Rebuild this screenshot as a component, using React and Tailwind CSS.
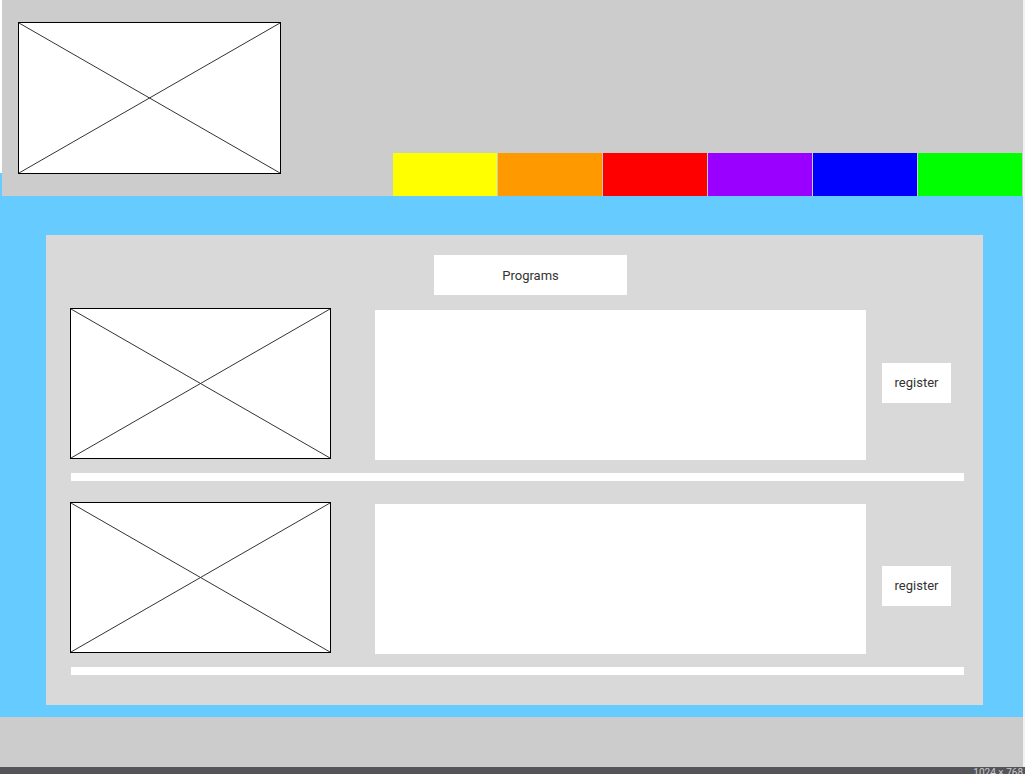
import React from "react";

// wireframe placeholder: box with an X across it
function Placeholder({ className }) {
  return (
    <div className={`relative border border-black bg-white shrink-0 ${className}`}>
      <svg className="absolute inset-0 w-full h-full" viewBox="0 0 100 100" preserveAspectRatio="none">
        <line x1="0" y1="0" x2="100" y2="100" stroke="#333" strokeWidth="1" vectorEffect="non-scaling-stroke" />
        <line x1="100" y1="0" x2="0" y2="100" stroke="#333" strokeWidth="1" vectorEffect="non-scaling-stroke" />
      </svg>
    </div>
  );
}

const navColors = ["bg-[#ffff00]", "bg-[#ff9900]", "bg-[#ff0000]", "bg-[#9900ff]", "bg-[#0000ff]", "bg-[#00ff00]"];

function ProgramRow({ regTop }) {
  return (
    <div className="flex flex-col">
      <div className="flex items-start">
        <Placeholder className="w-[261px] h-[151px]" />
        <div className="ml-[44px] mt-[2px] w-[491px] h-[150px] bg-white" />
        <button
          className={`ml-[16px] w-[69px] h-[40px] bg-white text-[13px] text-[#333] ${regTop}`}
          style={{ fontFamily: "Roboto, sans-serif" }}
        >
          register
        </button>
      </div>
      <div className="ml-px mt-[13px] w-[893px] h-[8px] bg-white" />
    </div>
  );
}

export default function App() {
  return (
    <div className="w-[1025px] h-[774px] flex flex-col bg-[#f2f2f2] overflow-hidden" style={{ fontFamily: "Roboto, sans-serif" }}>
      {/* header */}
      <div className="h-[173px] w-[1023px] flex bg-[#cccccc] border-l-2 border-white">
        <Placeholder className="ml-[16px] mt-[22px] w-[263px] h-[152px]" />
      </div>
      <div className="relative w-[1023px]">
        <div className="absolute left-[393px] -top-[20px] flex gap-px">
          {navColors.map((c) => (
            <div key={c} className={`w-[104px] h-[43px] ${c}`} />
          ))}
        </div>
      </div>
      <div className="h-[23px] w-[1023px] flex bg-[#66ccff]">
        <div className="ml-[2px] flex-1 bg-[#cccccc]" />
      </div>

      {/* main */}
      <div className="w-[1023px] h-[521px] bg-[#66ccff] pt-[39px] pl-[46px]">
        <div className="w-[937px] h-[470px] bg-[#d9d9d9] pt-[20px] pl-[24px]">
          <div className="ml-[364px] w-[193px] h-[40px] bg-white flex items-center justify-center pt-px text-[13px] text-[#333]">
            Programs
          </div>
          <div className="mt-[13px] flex flex-col gap-[21px]">
            <ProgramRow regTop="mt-[55px]" />
            <ProgramRow regTop="mt-[64px]" />
          </div>
        </div>
      </div>

      {/* footer */}
      <div className="w-[1023px] h-[50px] bg-[#cccccc]" />
      <div className="h-[7px] bg-[#545459] relative overflow-hidden">
        <span className="absolute right-[2px] top-[1px] text-[10px] leading-none text-[#ccc]">1024 × 768</span>
      </div>
    </div>
  );
}
